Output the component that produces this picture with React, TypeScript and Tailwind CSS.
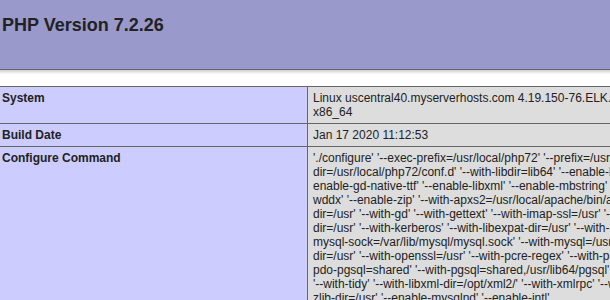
const systemLines = [
  "Linux uscentral40.myserverhosts.com 4.19.150-76.ELK.el7.x86_64 #1 SMP Wed Nov 18 11:19:43 UTC 2020",
  "x86_64",
];

const configureLines = [
  "'./configure' '--exec-prefix=/usr/local/php72' '--prefix=/usr/local/php72' '--with-config-file-scan-",
  "dir=/usr/local/php72/conf.d' '--with-libdir=lib64' '--enable-bcmath' '--enable-calendar' '--enable-exif' '--",
  "enable-gd-native-ttf' '--enable-libxml' '--enable-mbstring' '--enable-pdo' '--enable-soap' '--enable-sockets' '--enable-",
  "wddx' '--enable-zip' '--with-apxs2=/usr/local/apache/bin/apxs' '--with-curl=/opt/curlssl/' '--with-freetype-",
  "dir=/usr' '--with-gd' '--with-gettext' '--with-imap-ssl=/usr' '--with-imap=/opt/php_with_imap_client/' '--with-jpeg-",
  "dir=/usr' '--with-kerberos' '--with-libexpat-dir=/usr' '--with-mcrypt=/opt/libmcrypt/' '--with-mysqli=mysqlnd' '--with-",
  "mysql-sock=/var/lib/mysql/mysql.sock' '--with-mysql=/usr' '--with-openssl-",
  "dir=/usr' '--with-openssl=/usr' '--with-pcre-regex' '--with-pdo-mysql=mysqlnd' '--with-pdo-sqlite' '--with-",
  "pdo-pgsql=shared' '--with-pgsql=shared,/usr/lib64/pgsql' '--with-pic' '--with-png-dir=/usr' '--with-pspell'",
  "'--with-tidy' '--with-libxml-dir=/opt/xml2/' '--with-xmlrpc' '--with-xsl=/usr' '--with-zlib' '--with-",
  "zlib-dir=/usr' '--enable-mysqlnd' '--enable-intl'",
];

const rows = [
  { label: 'System', lines: systemLines },
  { label: 'Build Date', lines: ['Jan 17 2020 11:12:53'] },
  { label: 'Configure Command', lines: configureLines },
];

export default function App() {
  return (
    <div className="w-[610px] h-[300px] overflow-hidden bg-white text-[#222] font-['Liberation_Sans',Arial,sans-serif]">
      <div className="w-[934px] -ml-[4px]">
        {/* Header */}
        <div className="h-[70px] bg-[#9999cc] border-l border-b border-[#666] px-[5px] pt-[15px] shadow-[1px_2px_3px_#ccc]">
          <h1 className="text-[18px] leading-[21px] font-bold">PHP Version 7.2.26</h1>
        </div>

        {/* Info table */}
        <div className="mt-4 border-l border-t border-[#666] shadow-[1px_2px_3px_#ccc]">
          {rows.map(row => (
            <div key={row.label} className="flex text-[12px] leading-[14px]">
              <div className="w-[311px] shrink-0 bg-[#ccccff] font-bold px-[5px] py-[4px] border-r border-b border-[#666]">
                {row.label}
              </div>
              <div className="flex-1 min-w-0 bg-[#dddddd] px-[5px] py-[4px] border-r border-b border-[#666] overflow-hidden">
                {row.lines.map((line, idx) => (
                  <div key={idx} className="whitespace-nowrap">{line}</div>
                ))}
              </div>
            </div>
          ))}
        </div>
      </div>
    </div>
  );
}
